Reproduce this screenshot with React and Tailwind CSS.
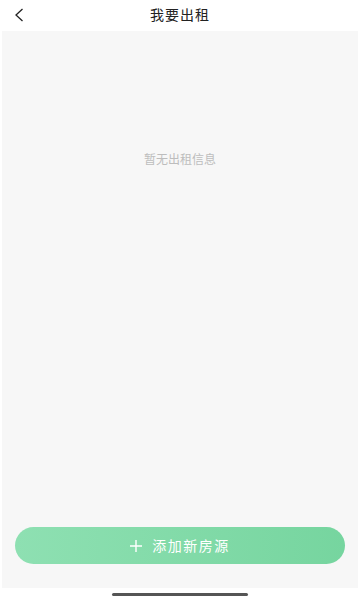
export default function App() {
  return (
    <div
      className="flex h-[600px] w-[360px] flex-col bg-white"
      style={{ fontFamily: '"Noto Sans CJK SC", "Noto Sans", sans-serif' }}
    >
      <header className="relative flex h-[31px] shrink-0 items-center justify-center">
        <button className="absolute left-[13px] top-[7px] flex h-[16px] w-[12px] items-center justify-center">
          <svg width="10" height="14" viewBox="0 0 10 14" fill="none">
            <path d="M8.5 1 L2 7 L8.5 13" stroke="#222" strokeWidth="1.3" />
          </svg>
        </button>
        <h1 className="-mt-[3px] text-[14px] leading-none tracking-[1px] text-[#222]">我要出租</h1>
      </header>

      <main className="mx-[2px] flex flex-1 flex-col bg-[#f7f7f7]">
        <p className="mt-[119px] text-center text-[12px] text-[#bdbdbd]">暂无出租信息</p>
        <div className="flex-1" />
        <div className="px-[13px] pb-[24px]">
          <button className="flex h-[37px] w-full items-center justify-center gap-[10px] rounded-full bg-gradient-to-r from-[#8ee0b2] to-[#76d59f] text-white">
            <svg width="12" height="12" viewBox="0 0 12 12">
              <path d="M6 0 V12 M0 6 H12" stroke="white" strokeWidth="1.4" />
            </svg>
            <span className="text-[14px] tracking-[1.5px]">添加新房源</span>
          </button>
        </div>
      </main>

      <footer className="flex h-[12px] shrink-0 items-center justify-center">
        <div className="mt-[1px] h-[3px] w-[136px] rounded-full bg-[#555]" />
      </footer>
    </div>
  );
}
